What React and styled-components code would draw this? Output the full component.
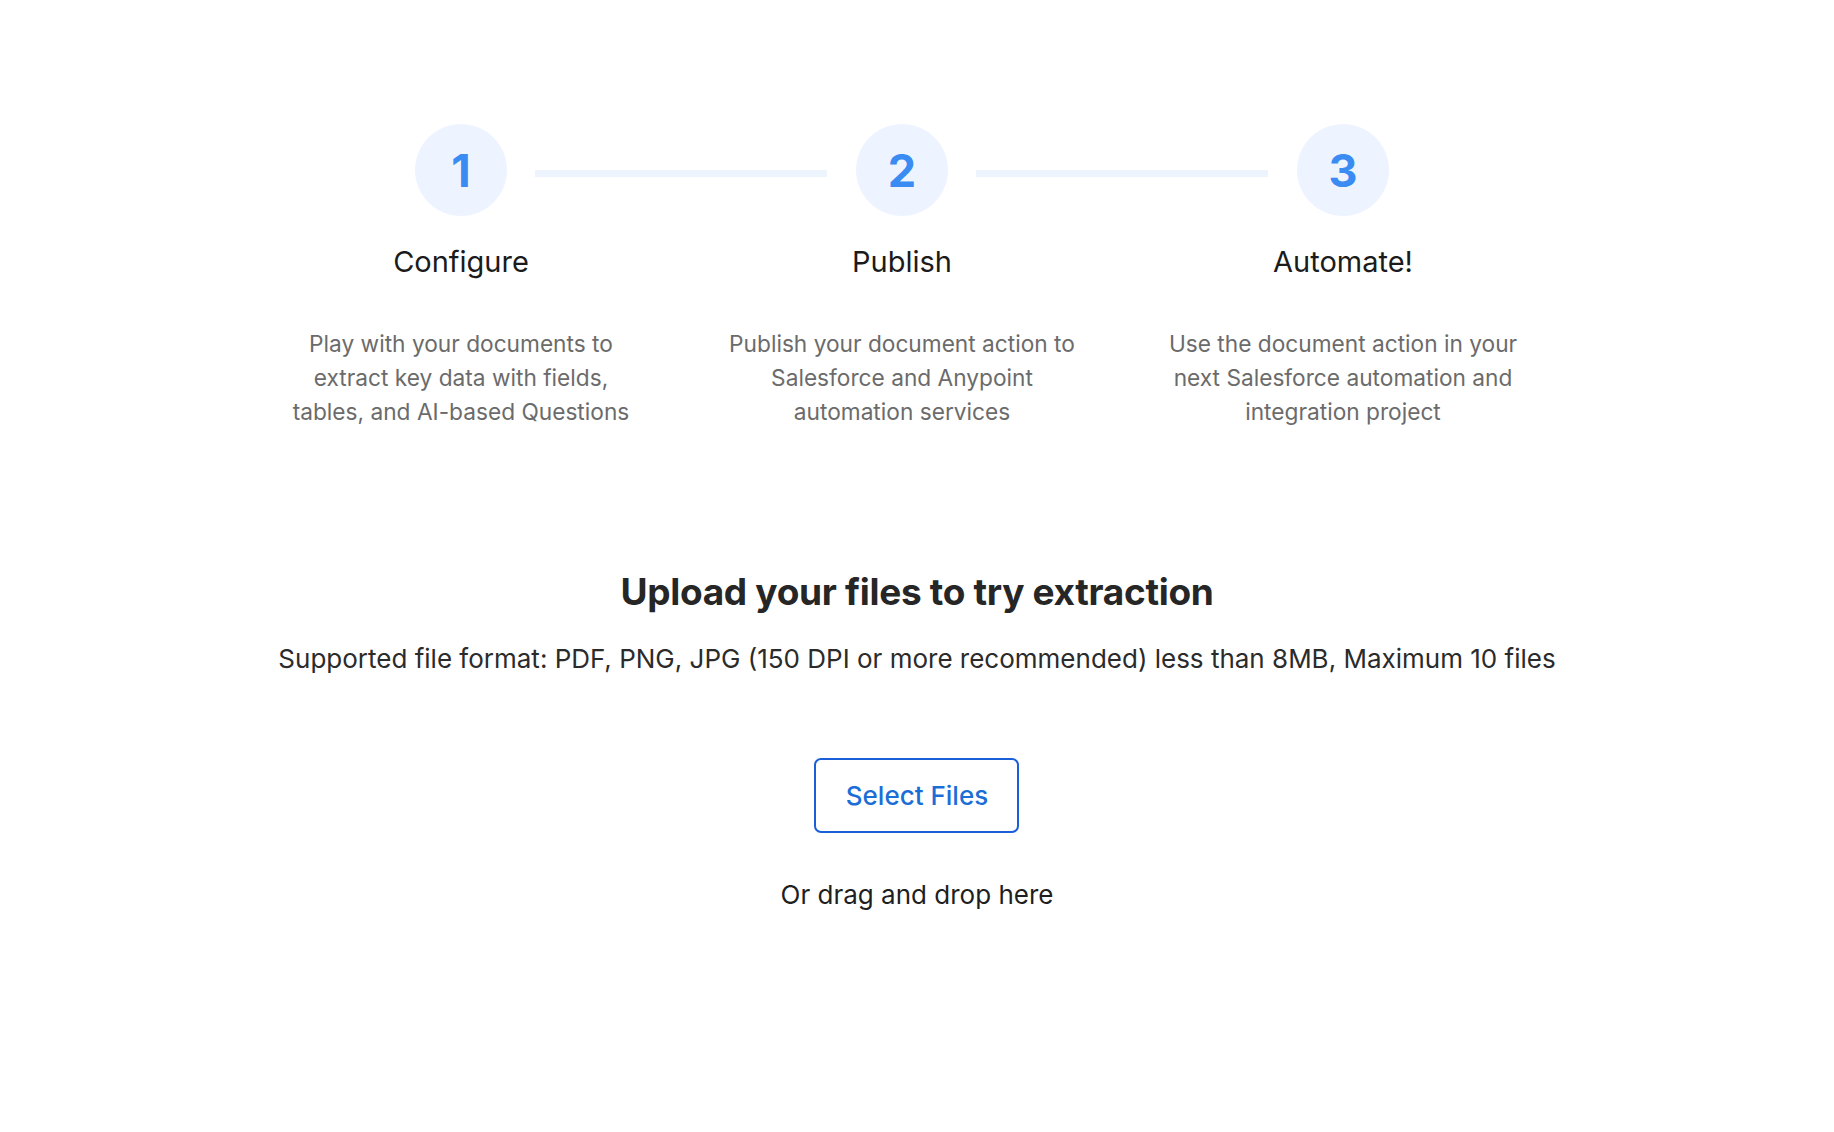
import React from 'react';
import styled, { createGlobalStyle } from 'styled-components';

const GlobalStyle = createGlobalStyle`
  html, body {
    margin: 0;
    padding: 0;
    background: #fff;
  }
  body {
    font-family: Inter, "Noto Sans", "Liberation Sans", sans-serif;
    -webkit-font-smoothing: antialiased;
  }
`;

const steps = [
    {
        num: 1,
        title: 'Configure',
        text: ['Play with your documents to', 'extract key data with fields,', 'tables, and AI-based Questions'],
    },
    {
        num: 2,
        title: 'Publish',
        text: ['Publish your document action to', 'Salesforce and Anypoint', 'automation services'],
    },
    {
        num: 3,
        title: 'Automate!',
        text: ['Use the document action in your', 'next Salesforce automation and', 'integration project'],
    },
];

function App() {
    return (
        <>
            <GlobalStyle />
            <Page>
                <Steps>
                    {steps.map((step, i) => (
                        <Step key={step.num} $connector={i < steps.length - 1}>
                            <Circle>{step.num}</Circle>
                            <StepTitle>{step.title}</StepTitle>
                            <StepText>
                                {step.text.map((line) => (
                                    <span key={line}>{line}</span>
                                ))}
                            </StepText>
                        </Step>
                    ))}
                </Steps>
                <Upload>
                    <Heading>Upload your files to try extraction</Heading>
                    <Formats>
                        Supported file format: PDF, PNG, JPG (150 DPI or more recommended) less than 8MB, Maximum 10 files
                    </Formats>
                    <SelectButton type="button">Select Files</SelectButton>
                    <DropHint>Or drag and drop here</DropHint>
                </Upload>
            </Page>
        </>
    );
}

export default App;

const Page = styled.div`
  display: flex;
  flex-direction: column;
  align-items: center;
  min-height: 1132px;
  padding-top: 124px;
  box-sizing: border-box;
`;

const Steps = styled.div`
  display: grid;
  grid-template-columns: repeat(3, 441px);
  padding-right: 30px;
`;

const Step = styled.div`
  position: relative;
  display: flex;
  flex-direction: column;
  align-items: center;
  &::after {
    content: '';
    display: ${({ $connector }) => ($connector ? 'block' : 'none')};
    position: absolute;
    top: 46px;
    left: 294px;
    width: 292px;
    height: 7px;
    background: #eef4fe;
  }
`;

const Circle = styled.div`
  display: flex;
  align-items: center;
  justify-content: center;
  width: 92px;
  height: 92px;
  border-radius: 50%;
  background: #eef4ff;
  color: #3a8cf2;
  font-size: 45px;
  font-weight: 700;
`;

const StepTitle = styled.h3`
  margin: 28px 0 0;
  font-size: 29px;
  line-height: 36px;
  font-weight: 400;
  color: #1b1b1b;
`;

const StepText = styled.p`
  display: flex;
  flex-direction: column;
  align-items: center;
  margin: 47px 0 0;
  font-size: 22.7px;
  line-height: 34px;
  color: #6b6b6b;
`;

const Upload = styled.div`
  display: flex;
  flex-direction: column;
  align-items: center;
  margin-top: 140px;
`;

const Heading = styled.h2`
  margin: 0;
  font-size: 37px;
  line-height: 46px;
  font-weight: 700;
  letter-spacing: -0.3px;
  color: #262626;
`;

const Formats = styled.p`
  margin: 27px 0 0;
  font-size: 26px;
  line-height: 34px;
  color: #2b2b2b;
`;

const SelectButton = styled.button`
  margin-top: 82px;
  width: 205px;
  height: 75px;
  border: 2px solid #1a5fd8;
  border-radius: 7px;
  background: #fff;
  color: #1b6ed6;
  font-family: inherit;
  font-size: 26px;
  font-weight: 500;
  cursor: pointer;
`;

const DropHint = styled.p`
  margin: 45px 0 0;
  font-size: 26px;
  line-height: 34px;
  color: #1f1f1f;
`;
